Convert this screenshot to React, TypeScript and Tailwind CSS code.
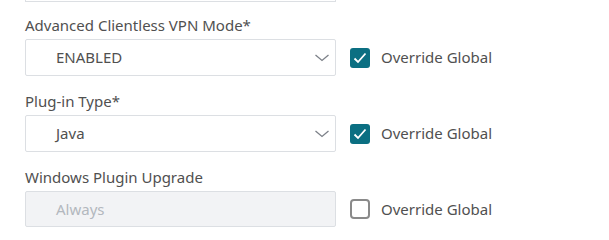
import React from "react";

function Chevron() {
  return (
    <svg width="16" height="8" viewBox="0 0 16 8" className="shrink-0">
      <path d="M1.5 1 L8 6.5 L14.5 1" fill="none" stroke="#7c8088" strokeWidth="1.3" />
    </svg>
  );
}

function Check({ checked }: { checked: boolean }) {
  if (checked) {
    return (
      <div className="w-[20px] h-[20px] rounded-[3px] bg-[#0b6f82] flex items-center justify-center">
        <svg width="14" height="12" viewBox="0 0 14 12">
          <path d="M1.5 6.5 L5 10 L12.5 1.5" fill="none" stroke="#fff" strokeWidth="1.8" />
        </svg>
      </div>
    );
  }
  return <div className="w-[20px] h-[20px] rounded-[4px] border-2 border-[#8a8a8a] bg-white" />;
}

function Row({
  label,
  value,
  checked,
  disabled,
}: {
  label: string;
  value: string;
  checked: boolean;
  disabled?: boolean;
}) {
  return (
    <div className="flex flex-col">
      <div className="h-[18px] leading-[18px] text-[15px] text-[#505050]">{label}</div>
      <div className="flex items-center mt-[5px]">
        <div
          className={
            disabled
              ? "w-[311px] h-[36px] border border-[#dcdfe3] rounded-[2px] bg-[#f2f3f5] flex items-center pl-[30px] pr-[5px]"
              : "w-[311px] h-[37px] border border-[#dcdfe3] rounded-[2px] bg-white flex items-center pl-[30px] pr-[5px]"
          }
        >
          <span className={disabled ? "flex-1 text-[15px] text-[#b3b8be]" : "flex-1 text-[15px] text-[#505050]"}>
            {value}
          </span>
          {!disabled && <Chevron />}
        </div>
        <div className="ml-[14px] flex items-center">
          <Check checked={checked} />
          <span className="ml-[11px] text-[15px] text-[#505050]">Override Global</span>
        </div>
      </div>
    </div>
  );
}

export default function App() {
  return (
    <div
      className="w-[609px] h-[240px] bg-white overflow-hidden relative"
      style={{ fontFamily: '"Noto Sans", "Open Sans", sans-serif' }}
    >
      <div className="ml-[25px] w-[311px] h-[2px] border border-t-0 border-[#dcdfe3]" />
      <div className="pl-[25px] pt-[14px] flex flex-col gap-[16px]">
        <Row label="Advanced Clientless VPN Mode*" value="ENABLED" checked />
        <Row label="Plug-in Type*" value="Java" checked />
        <Row label="Windows Plugin Upgrade" value="Always" checked={false} disabled />
      </div>
    </div>
  );
}
